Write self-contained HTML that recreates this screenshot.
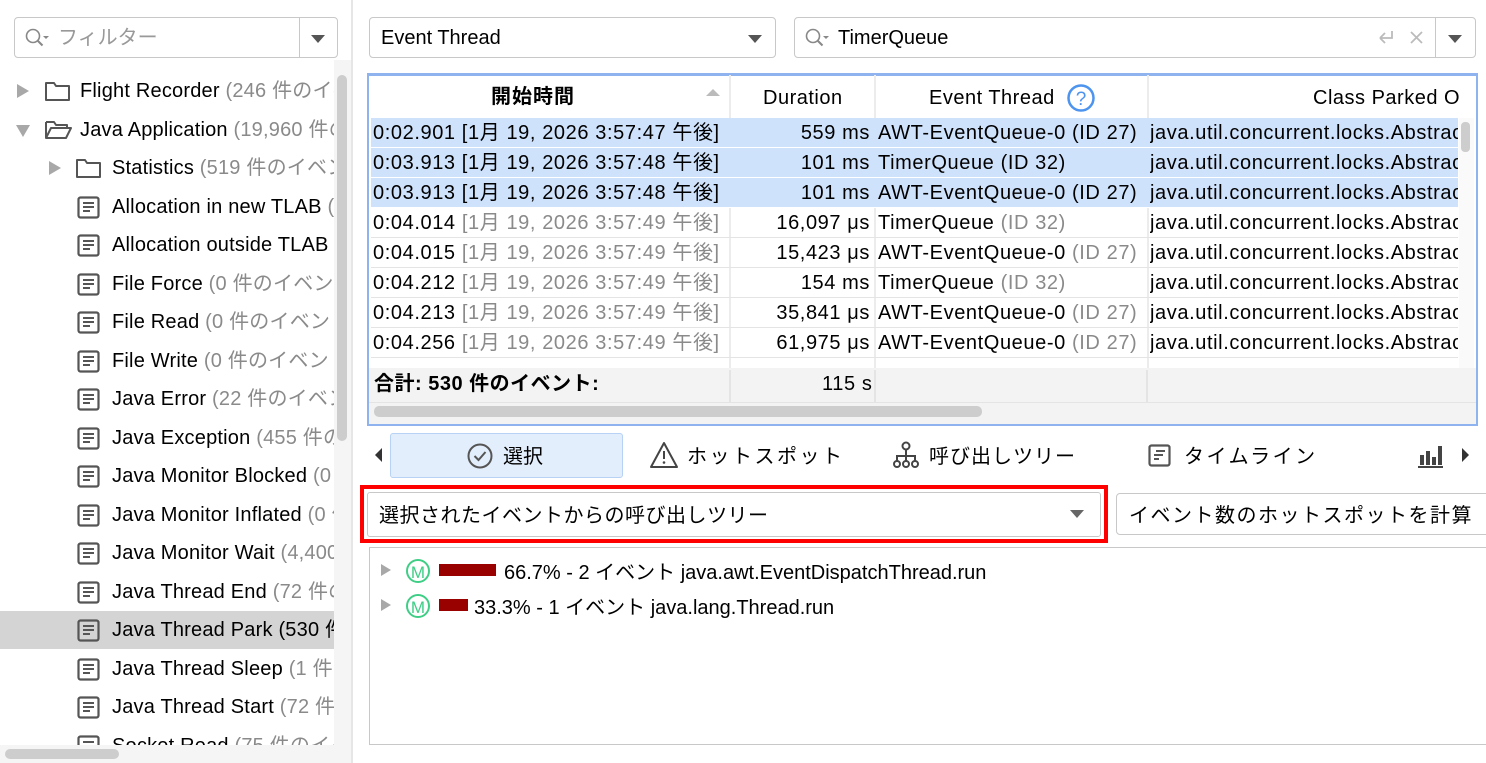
<!DOCTYPE html>
<html><head><meta charset="utf-8"><style>
*{margin:0;padding:0;box-sizing:border-box}
body{width:1486px;height:763px;overflow:hidden;background:#fff;font-family:"Liberation Sans","Noto Sans CJK JP",sans-serif;font-size:20px;line-height:24px;color:#000;position:relative}
.a{position:absolute;white-space:nowrap}
.g{color:#8a8a8a}
.tri{position:absolute;width:0;height:0}
.row{position:absolute;left:0;height:38px;width:334px;white-space:nowrap;overflow:hidden}
.row span.t{position:absolute;top:7px;white-space:nowrap;letter-spacing:0.2px}
.tr{position:absolute;left:371px;width:1087px;height:30px;border-bottom:1px solid #e4e4e4;overflow:hidden;white-space:nowrap;letter-spacing:0.6px}
.tr.s{background:#cfe2fb;border-bottom:1px solid #fff}
.tr div{position:absolute;top:3px;overflow:hidden}
.c1{left:2px;width:356px}.c2{left:359px;width:143px;text-align:right;padding-right:3px}.c3{left:507px;width:270px}.c4{left:779px;width:310px}
.vl{position:absolute;top:75px;height:325px;width:2px;background:#ececec}
</style></head><body>
<div class="a" style="left:14px;top:17px;width:324px;height:41px;border:1px solid #c8c8c8;border-radius:4px"></div>
<div class="a" style="left:299px;top:18px;width:1px;height:39px;background:#c8c8c8"></div>
<div class="tri" style="left:311px;top:35px;border-left:7px solid transparent;border-right:7px solid transparent;border-top:8px solid #555"></div>
<svg class="a" style="left:24px;top:27px" width="30" height="22"><circle cx="9" cy="9" r="6.5" fill="none" stroke="#888" stroke-width="1.6"/><path d="M13.5 13.5l5 5" stroke="#888" stroke-width="2"/><path d="M19 9h6l-3 3z" fill="#888"/></svg>
<div class="a g" style="left:58px;top:26px;color:#999">フィルター</div>

<div class="a" style="left:334px;top:60px;width:17px;height:685px;background:#f5f5f5"></div>
<div class="a" style="left:337px;top:75px;width:10px;height:366px;background:#cdcdcd;border-radius:5px"></div>
<div class="a" style="left:351px;top:0;width:2px;height:763px;background:#e6e6e6"></div>
<div class="a" style="left:0;top:745px;width:351px;height:18px;background:#f5f5f5"></div>
<div class="a" style="left:5px;top:749px;width:114px;height:10px;background:#cdcdcd;border-radius:5px"></div>

<div class="row" style="top:72px">
<div class="tri" style="left:17px;top:12px;border-top:7px solid transparent;border-bottom:7px solid transparent;border-left:12px solid #a8a8a8"></div>
<svg class="a" style="left:44px;top:8px" width="28" height="22"><path d="M2 3h8l2 3h13v14H2z" fill="none" stroke="#555" stroke-width="2" stroke-linejoin="round"/></svg>
<span class="t" style="left:80px">Flight Recorder <span class="g">(246 件のイベント)</span></span></div>
<div class="row" style="top:111px">
<div class="tri" style="left:16px;top:14px;border-left:7px solid transparent;border-right:7px solid transparent;border-top:12px solid #a8a8a8"></div>
<svg class="a" style="left:44px;top:8px" width="30" height="22"><path d="M2 3h8l2 3h11v3M2 3v16h20l5-10H7l-5 10" fill="none" stroke="#555" stroke-width="2" stroke-linejoin="round"/></svg>
<span class="t" style="left:80px">Java Application <span class="g">(19,960 件のイベント)</span></span></div>
<div class="row" style="top:149px">
<div class="tri" style="left:49px;top:12px;border-top:7px solid transparent;border-bottom:7px solid transparent;border-left:12px solid #a8a8a8"></div>
<svg class="a" style="left:75px;top:8px" width="28" height="22"><path d="M2 3h8l2 3h13v14H2z" fill="none" stroke="#555" stroke-width="2" stroke-linejoin="round"/></svg>
<span class="t" style="left:112px">Statistics <span class="g">(519 件のイベント)</span></span></div>

<div class="a" style="left:0;top:611px;width:334px;height:38px;background:#d4d4d4"></div>
<div style="position:absolute;left:0;top:0">
<div class="row" style="top:188px"><svg class="a" style="left:77px;top:8px" width="24" height="24"><rect x="1.5" y="1.5" width="20" height="20" rx="2" fill="none" stroke="#555" stroke-width="2.2"/><path d="M6 7h11M6 11h11M6 15h7" stroke="#555" stroke-width="2"/></svg><span class="t" style="left:112px">Allocation in new TLAB <span class="g">(0 件)</span></span></div>
<div class="row" style="top:226px"><svg class="a" style="left:77px;top:8px" width="24" height="24"><rect x="1.5" y="1.5" width="20" height="20" rx="2" fill="none" stroke="#555" stroke-width="2.2"/><path d="M6 7h11M6 11h11M6 15h7" stroke="#555" stroke-width="2"/></svg><span class="t" style="left:112px">Allocation outside TLAB</span></div>
<div class="row" style="top:265px"><svg class="a" style="left:77px;top:8px" width="24" height="24"><rect x="1.5" y="1.5" width="20" height="20" rx="2" fill="none" stroke="#555" stroke-width="2.2"/><path d="M6 7h11M6 11h11M6 15h7" stroke="#555" stroke-width="2"/></svg><span class="t" style="left:112px">File Force <span class="g">(0 件のイベント)</span></span></div>
<div class="row" style="top:303px"><svg class="a" style="left:77px;top:8px" width="24" height="24"><rect x="1.5" y="1.5" width="20" height="20" rx="2" fill="none" stroke="#555" stroke-width="2.2"/><path d="M6 7h11M6 11h11M6 15h7" stroke="#555" stroke-width="2"/></svg><span class="t" style="left:112px">File Read <span class="g">(0 件のイベント)</span></span></div>
<div class="row" style="top:342px"><svg class="a" style="left:77px;top:8px" width="24" height="24"><rect x="1.5" y="1.5" width="20" height="20" rx="2" fill="none" stroke="#555" stroke-width="2.2"/><path d="M6 7h11M6 11h11M6 15h7" stroke="#555" stroke-width="2"/></svg><span class="t" style="left:112px">File Write <span class="g">(0 件のイベント)</span></span></div>
<div class="row" style="top:380px"><svg class="a" style="left:77px;top:8px" width="24" height="24"><rect x="1.5" y="1.5" width="20" height="20" rx="2" fill="none" stroke="#555" stroke-width="2.2"/><path d="M6 7h11M6 11h11M6 15h7" stroke="#555" stroke-width="2"/></svg><span class="t" style="left:112px">Java Error <span class="g">(22 件のイベント)</span></span></div>
<div class="row" style="top:419px"><svg class="a" style="left:77px;top:8px" width="24" height="24"><rect x="1.5" y="1.5" width="20" height="20" rx="2" fill="none" stroke="#555" stroke-width="2.2"/><path d="M6 7h11M6 11h11M6 15h7" stroke="#555" stroke-width="2"/></svg><span class="t" style="left:112px">Java Exception <span class="g">(455 件のイベント)</span></span></div>
<div class="row" style="top:457px"><svg class="a" style="left:77px;top:8px" width="24" height="24"><rect x="1.5" y="1.5" width="20" height="20" rx="2" fill="none" stroke="#555" stroke-width="2.2"/><path d="M6 7h11M6 11h11M6 15h7" stroke="#555" stroke-width="2"/></svg><span class="t" style="left:112px">Java Monitor Blocked <span class="g">(0 件)</span></span></div>
<div class="row" style="top:496px"><svg class="a" style="left:77px;top:8px" width="24" height="24"><rect x="1.5" y="1.5" width="20" height="20" rx="2" fill="none" stroke="#555" stroke-width="2.2"/><path d="M6 7h11M6 11h11M6 15h7" stroke="#555" stroke-width="2"/></svg><span class="t" style="left:112px">Java Monitor Inflated <span class="g">(0 件)</span></span></div>
<div class="row" style="top:534px"><svg class="a" style="left:77px;top:8px" width="24" height="24"><rect x="1.5" y="1.5" width="20" height="20" rx="2" fill="none" stroke="#555" stroke-width="2.2"/><path d="M6 7h11M6 11h11M6 15h7" stroke="#555" stroke-width="2"/></svg><span class="t" style="left:112px">Java Monitor Wait <span class="g">(4,400 件)</span></span></div>
<div class="row" style="top:573px"><svg class="a" style="left:77px;top:8px" width="24" height="24"><rect x="1.5" y="1.5" width="20" height="20" rx="2" fill="none" stroke="#555" stroke-width="2.2"/><path d="M6 7h11M6 11h11M6 15h7" stroke="#555" stroke-width="2"/></svg><span class="t" style="left:112px">Java Thread End <span class="g">(72 件のイベント)</span></span></div>
<div class="row" style="top:611px"><svg class="a" style="left:77px;top:8px" width="24" height="24"><rect x="1.5" y="1.5" width="20" height="20" rx="2" fill="none" stroke="#555" stroke-width="2.2"/><path d="M6 7h11M6 11h11M6 15h7" stroke="#555" stroke-width="2"/></svg><span class="t" style="left:112px">Java Thread Park (530 件のイベント)</span></div>
<div class="row" style="top:650px"><svg class="a" style="left:77px;top:8px" width="24" height="24"><rect x="1.5" y="1.5" width="20" height="20" rx="2" fill="none" stroke="#555" stroke-width="2.2"/><path d="M6 7h11M6 11h11M6 15h7" stroke="#555" stroke-width="2"/></svg><span class="t" style="left:112px">Java Thread Sleep <span class="g">(1 件のイベント)</span></span></div>
<div class="row" style="top:688px"><svg class="a" style="left:77px;top:8px" width="24" height="24"><rect x="1.5" y="1.5" width="20" height="20" rx="2" fill="none" stroke="#555" stroke-width="2.2"/><path d="M6 7h11M6 11h11M6 15h7" stroke="#555" stroke-width="2"/></svg><span class="t" style="left:112px">Java Thread Start <span class="g">(72 件のイベント)</span></span></div>
<div class="row" style="top:727px;height:18px"><svg class="a" style="left:77px;top:8px" width="24" height="24"><rect x="1.5" y="1.5" width="20" height="20" rx="2" fill="none" stroke="#555" stroke-width="2.2"/><path d="M6 7h11M6 11h11M6 15h7" stroke="#555" stroke-width="2"/></svg><span class="t" style="left:112px">Socket Read <span class="g">(75 件のイベント)</span></span></div>
</div>

<div class="a" style="left:369px;top:17px;width:407px;height:41px;border:1px solid #c8c8c8;border-radius:4px"></div>
<div class="a" style="left:381px;top:26px">Event Thread</div>
<div class="tri" style="left:748px;top:35px;border-left:7px solid transparent;border-right:7px solid transparent;border-top:8px solid #555"></div>
<div class="a" style="left:794px;top:17px;width:682px;height:41px;border:1px solid #c8c8c8;border-radius:4px"></div>
<div class="a" style="left:1435px;top:18px;width:1px;height:39px;background:#c8c8c8"></div>
<div class="tri" style="left:1448px;top:35px;border-left:7px solid transparent;border-right:7px solid transparent;border-top:8px solid #555"></div>
<svg class="a" style="left:804px;top:27px" width="30" height="22"><circle cx="9" cy="9" r="6.5" fill="none" stroke="#888" stroke-width="1.6"/><path d="M13.5 13.5l5 5" stroke="#888" stroke-width="2"/><path d="M19 9h6l-3 3z" fill="#888"/></svg>
<div class="a" style="left:838px;top:26px">TimerQueue</div>
<svg class="a" style="left:1376px;top:27px" width="50" height="22"><path d="M16 4v7H4m0 0l5-5m-5 5l5 5" fill="none" stroke="#bbb" stroke-width="1.8"/><path d="M35 5l11 11M46 5L35 16" stroke="#bbb" stroke-width="1.8"/></svg>

<div class="a" style="left:367px;top:73px;width:1111px;height:353px;border:2px solid #8fb3ee;border-top-width:3px"></div>
<div class="a" style="left:371px;top:118px;width:1087px;height:1px;background:#e4e4e4"></div>
<div class="vl" style="left:729px"></div><div class="vl" style="left:874px"></div><div class="vl" style="left:1147px"></div>
<div class="a" style="left:491px;top:85px;font-weight:bold;letter-spacing:1px">開始時間</div>
<div class="tri" style="left:706px;top:89px;border-left:7px solid transparent;border-right:7px solid transparent;border-bottom:7px solid #bbb"></div>
<div class="a" style="left:763px;top:86px;letter-spacing:0.5px">Duration</div>
<div class="a" style="left:929px;top:86px;letter-spacing:0.5px">Event Thread</div>
<svg class="a" style="left:1066px;top:83px" width="30" height="30"><circle cx="15" cy="15" r="12.5" fill="none" stroke="#4d94ef" stroke-width="2.5"/><text x="15" y="22" text-anchor="middle" font-size="19" font-family="Liberation Sans" fill="#4d94ef">?</text></svg>
<div class="a" style="left:1313px;top:86px;letter-spacing:0.5px">Class Parked O</div>

<div class="tr s" style="top:118px"><div class="c1">0:02.901 [1月 19, 2026 3:57:47 午後]</div><div class="c2">559 ms</div><div class="c3">AWT-EventQueue-0 (ID 27)</div><div class="c4">java.util.concurrent.locks.AbstractQ</div></div>
<div class="tr s" style="top:148px"><div class="c1">0:03.913 [1月 19, 2026 3:57:48 午後]</div><div class="c2">101 ms</div><div class="c3">TimerQueue (ID 32)</div><div class="c4">java.util.concurrent.locks.AbstractQ</div></div>
<div class="tr s" style="top:178px"><div class="c1">0:03.913 [1月 19, 2026 3:57:48 午後]</div><div class="c2">101 ms</div><div class="c3">AWT-EventQueue-0 (ID 27)</div><div class="c4">java.util.concurrent.locks.AbstractQ</div></div>
<div class="tr" style="top:208px"><div class="c1">0:04.014 <span class="g">[1月 19, 2026 3:57:49 午後]</span></div><div class="c2">16,097 μs</div><div class="c3">TimerQueue <span class="g">(ID 32)</span></div><div class="c4">java.util.concurrent.locks.AbstractQ</div></div>
<div class="tr" style="top:238px"><div class="c1">0:04.015 <span class="g">[1月 19, 2026 3:57:49 午後]</span></div><div class="c2">15,423 μs</div><div class="c3">AWT-EventQueue-0 <span class="g">(ID 27)</span></div><div class="c4">java.util.concurrent.locks.AbstractQ</div></div>
<div class="tr" style="top:268px"><div class="c1">0:04.212 <span class="g">[1月 19, 2026 3:57:49 午後]</span></div><div class="c2">154 ms</div><div class="c3">TimerQueue <span class="g">(ID 32)</span></div><div class="c4">java.util.concurrent.locks.AbstractQ</div></div>
<div class="tr" style="top:298px"><div class="c1">0:04.213 <span class="g">[1月 19, 2026 3:57:49 午後]</span></div><div class="c2">35,841 μs</div><div class="c3">AWT-EventQueue-0 <span class="g">(ID 27)</span></div><div class="c4">java.util.concurrent.locks.AbstractQ</div></div>
<div class="tr" style="top:328px"><div class="c1">0:04.256 <span class="g">[1月 19, 2026 3:57:49 午後]</span></div><div class="c2">61,975 μs</div><div class="c3">AWT-EventQueue-0 <span class="g">(ID 27)</span></div><div class="c4">java.util.concurrent.locks.AbstractQ</div></div>
<div class="tr" style="top:358px;height:10px;border:none"></div>
<div class="a" style="left:1459px;top:118px;width:15px;height:250px;background:#fafafa"></div>
<div class="a" style="left:1461px;top:122px;width:9px;height:30px;background:#cdcdcd;border-radius:4px"></div>
<div class="a" style="left:369px;top:368px;width:1107px;height:56px;background:#f3f3f3"></div>
<div class="a" style="left:729px;top:370px;width:2px;height:32px;background:#e4e4e4"></div>
<div class="a" style="left:874px;top:370px;width:2px;height:32px;background:#e4e4e4"></div>
<div class="a" style="left:1146px;top:370px;width:2px;height:32px;background:#e4e4e4"></div>
<div class="a" style="left:369px;top:402px;width:1107px;height:1px;background:#e4e4e4"></div>
<div class="a" style="left:374px;top:372px;font-weight:bold;letter-spacing:0.5px">合計: 530 件のイベント:</div>
<div class="a" style="left:822px;top:372px;letter-spacing:0.6px">115 s</div>
<div class="a" style="left:374px;top:406px;width:608px;height:11px;background:#cdcdcd;border-radius:5px"></div>

<div class="tri" style="left:375px;top:448px;border-top:7px solid transparent;border-bottom:7px solid transparent;border-right:7px solid #333"></div>
<div class="a" style="left:390px;top:433px;width:233px;height:45px;background:#e3eefc;border:1px solid #b7d2f5;border-radius:3px"></div>
<svg class="a" style="left:466px;top:442px" width="28" height="28"><circle cx="14" cy="14" r="11.5" fill="none" stroke="#555" stroke-width="2"/><path d="M8.5 14l4 4 7-8" fill="none" stroke="#555" stroke-width="2"/></svg>
<div class="a" style="left:503px;top:445px">選択</div>
<svg class="a" style="left:649px;top:441px" width="30" height="28"><path d="M15 2L28 26H2z" fill="none" stroke="#444" stroke-width="2" stroke-linejoin="round"/><path d="M15 10v8" stroke="#444" stroke-width="2"/><circle cx="15" cy="21.5" r="1.3" fill="#444"/></svg>
<div class="a" style="left:687px;top:445px;letter-spacing:2.5px">ホットスポット</div>
<svg class="a" style="left:892px;top:441px" width="28" height="28"><circle cx="14" cy="5" r="3.5" fill="none" stroke="#444" stroke-width="2"/><path d="M14 9v6M5 20v-5h18v5M14 15v5" fill="none" stroke="#444" stroke-width="2"/><circle cx="5" cy="23" r="3" fill="none" stroke="#444" stroke-width="2"/><circle cx="14" cy="23" r="3" fill="none" stroke="#444" stroke-width="2"/><circle cx="23" cy="23" r="3" fill="none" stroke="#444" stroke-width="2"/></svg>
<div class="a" style="left:929px;top:445px;letter-spacing:1px">呼び出しツリー</div>
<svg class="a" style="left:1148px;top:444px" width="24" height="24"><rect x="1.5" y="1.5" width="20" height="20" rx="2" fill="none" stroke="#555" stroke-width="2.2"/><path d="M8 7h9M6 11h9M6 15h5" stroke="#555" stroke-width="2"/></svg>
<div class="a" style="left:1184px;top:445px;letter-spacing:2.5px">タイムライン</div>
<svg class="a" style="left:1416px;top:443px" width="28" height="26"><path d="M2 24h25" stroke="#444" stroke-width="2"/><rect x="4" y="12" width="4" height="10" fill="#444"/><rect x="10" y="8" width="4" height="14" fill="#444"/><rect x="16" y="14" width="4" height="8" fill="#444"/><rect x="22" y="3" width="4" height="19" fill="#444"/></svg>
<div class="tri" style="left:1462px;top:448px;border-top:7px solid transparent;border-bottom:7px solid transparent;border-left:7px solid #333"></div>

<div class="a" style="left:360px;top:485px;width:748px;height:58px;border:4px solid #f00"></div>
<div class="a" style="left:367px;top:492px;width:734px;height:45px;border:1px solid #c8c8c8;border-radius:3px"></div>
<div class="a" style="left:379px;top:504px;letter-spacing:0.5px">選択されたイベントからの呼び出しツリー</div>
<div class="tri" style="left:1070px;top:510px;border-left:7px solid transparent;border-right:7px solid transparent;border-top:8px solid #666"></div>
<div class="a" style="left:1116px;top:493px;width:380px;height:42px;border:1px solid #c8c8c8;border-radius:4px;background:#fff"></div>
<div class="a" style="left:1129px;top:504px;letter-spacing:1.5px">イベント数のホットスポットを計算</div>

<div class="a" style="left:369px;top:547px;width:1130px;height:198px;border:1px solid #c8c8c8"></div>
<div class="tri" style="left:381px;top:564px;border-top:6px solid transparent;border-bottom:6px solid transparent;border-left:10px solid #a8a8a8"></div>
<svg class="a" style="left:405px;top:558px" width="28" height="26"><circle cx="13" cy="13" r="11" fill="none" stroke="#3fce86" stroke-width="2"/><text x="13" y="20" text-anchor="middle" font-size="17" font-family="Liberation Sans" fill="#3fce86">M</text></svg>
<div class="a" style="left:439px;top:564px;width:57px;height:12px;background:#990000"></div>
<div class="a" style="left:504px;top:561px">66.7% - 2 イベント java.awt.EventDispatchThread.run</div>
<div class="tri" style="left:381px;top:599px;border-top:6px solid transparent;border-bottom:6px solid transparent;border-left:10px solid #a8a8a8"></div>
<svg class="a" style="left:405px;top:593px" width="28" height="26"><circle cx="13" cy="13" r="11" fill="none" stroke="#3fce86" stroke-width="2"/><text x="13" y="20" text-anchor="middle" font-size="17" font-family="Liberation Sans" fill="#3fce86">M</text></svg>
<div class="a" style="left:439px;top:599px;width:29px;height:12px;background:#990000"></div>
<div class="a" style="left:474px;top:596px">33.3% - 1 イベント java.lang.Thread.run</div>
</body></html>
